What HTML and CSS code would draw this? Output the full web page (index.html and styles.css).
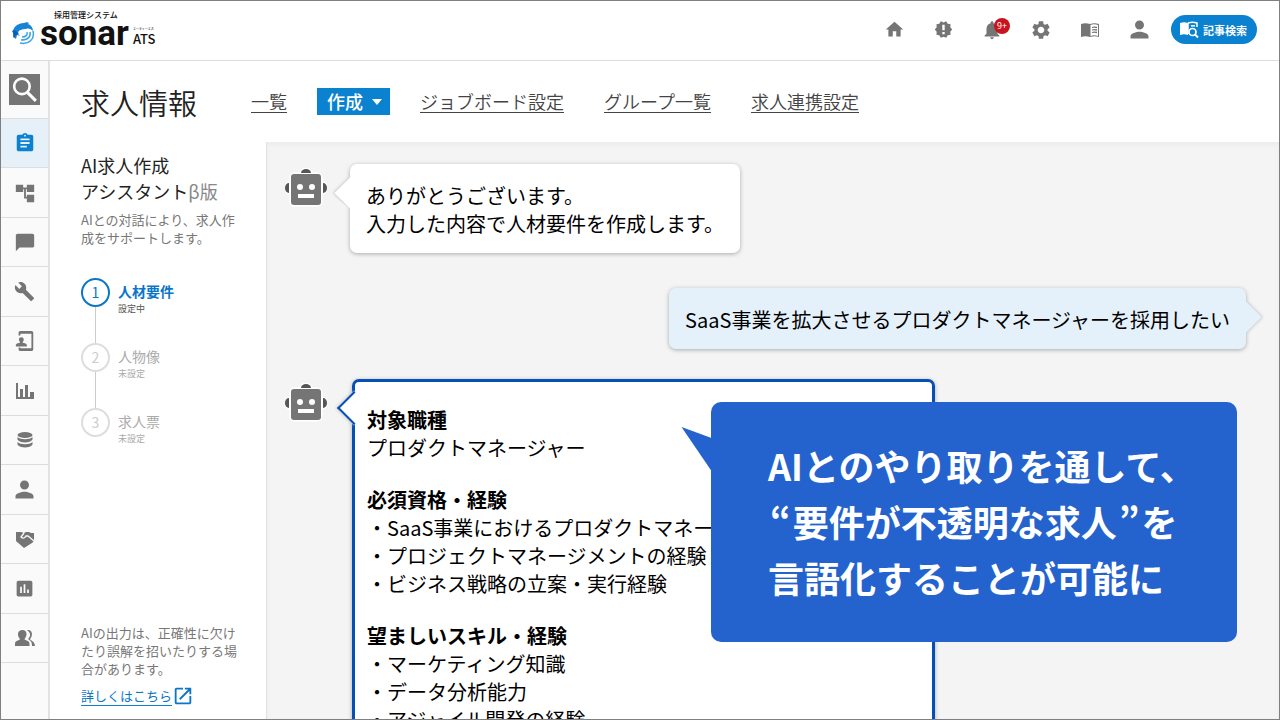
FILE: index.html
```
<!DOCTYPE html>
<html lang="ja">
<head>
  <meta charset="UTF-8">
  <title>求人情報 - sonar ATS</title>
  <link rel="stylesheet" href="styles.css">
</head>
<body>
  <!-- shared icons -->
  <svg class="defs" width="0" height="0">
    <symbol id="robot" viewBox="0 0 42 40">
      <g fill="#fff" stroke="#fff" stroke-width="3">
        <path d="M16 5a5 4 0 0 1 10 0z"/>
        <path d="M5 15a4 5 0 0 0 0 10z"/>
        <path d="M37 15a4 5 0 0 1 0 10z"/>
        <rect x="6" y="6" width="30" height="31" rx="3"/>
      </g>
      <g fill="#555">
        <path d="M16 5a5 4 0 0 1 10 0z"/>
        <path d="M4 15a4 5 0 0 0 0 10z"/>
        <path d="M38 15a4 5 0 0 1 0 10z"/>
      </g>
      <rect x="6" y="6" width="30" height="31" rx="3" fill="#757575"/>
      <g fill="#fff">
        <circle cx="15" cy="19" r="3"/>
        <circle cx="27" cy="19" r="3"/>
        <rect x="13" y="26" width="16" height="4"/>
      </g>
    </symbol>
    <symbol id="person" viewBox="0 0 24 24">
      <path d="M12 12c2.21 0 4-1.79 4-4s-1.79-4-4-4-4 1.79-4 4 1.79 4 4 4zm0 2c-2.67 0-8 1.34-8 4v2h16v-2c0-2.66-5.33-4-8-4z"/>
    </symbol>
  </svg>

  <header class="header">
    <a class="logo" href="#">
      <svg class="logo-mark" viewBox="0 0 23 23">
        <path fill="#1684d6" d="M1 12C0 6 5 1 12 1c2-1 4-1 5 0l-1 1c3 1 5 4 5 7-2-2-4-3-7-2-2 0-4 0-5 1-2 0-3 2-3 4l2 2-3-1-1 4C2 16 1 14 1 12z"/>
        <path fill="#0b5fb5" d="M0 9c1-1 3-1 4 0l3 3-3 1-2 3c-1-1-1-3 0-4z"/>
        <g fill="none" stroke="#37a5e4" stroke-width="1.5">
          <path d="M15 10c1 3-1 5-5 5"/>
          <path d="M18 10c1 5-2 8-9 8"/>
          <path d="M21 9c2 8-4 14-13 12"/>
        </g>
      </svg>
      <span class="logo-text">
        <span class="logo-lead">採用管理システム</span>
        <span class="logo-row">
          <span class="logo-name">sonar</span>
          <span class="logo-ats"><small>エーティーエス</small>ATS</span>
        </span>
      </span>
    </a>
    <nav class="tools">
      <a href="#" aria-label="ホーム"><svg width="21" height="21" viewBox="0 0 24 24"><path d="M10 20v-6h4v6h5v-8h3L12 3 2 12h3v8z"/></svg></a>
      <a href="#" aria-label="お知らせ"><svg width="19" height="19" viewBox="0 0 24 24"><path d="M23 12l-2.4-2.8.3-3.7-3.6-.8-1.9-3.2L12 3 8.600 1.500 6.700 4.700l-3.600.8.3 3.700L1 12l2.400 2.800-.3 3.700 3.600.8 1.900 3.200L12 21l3.400 1.500 1.900-3.200 3.600-.8-.3-3.700zM13.500 18h-3v-3h3zm0-5h-3V6h3z"/></svg></a>
      <a href="#" aria-label="通知"><svg width="22" height="22" viewBox="0 0 24 24"><path d="M12 22c1.100 0 2-.9 2-2h-4c0 1.100.9 2 2 2zm6-6v-5c0-3.070-1.640-5.640-4.500-6.320V4c0-.83-.67-1.500-1.500-1.500s-1.500.67-1.500 1.500v.68C7.630 5.360 6 7.920 6 11v5l-2 2v1h16v-1l-2-2z"/></svg><span class="count">9+</span></a>
      <a href="#" aria-label="設定"><svg width="22" height="22" viewBox="0 0 24 24"><path d="M19.14 12.94c.04-.3.06-.61.06-.94 0-.32-.02-.64-.07-.94l2.030-1.580c.18-.14.23-.41.12-.61l-1.920-3.320c-.12-.22-.37-.29-.59-.22l-2.390.96c-.5-.38-1.030-.7-1.620-.94l-.36-2.540c-.04-.24-.24-.41-.48-.41h-3.840c-.24 0-.43.17-.47.41l-.36 2.540c-.59.24-1.130.57-1.620.94l-2.390-.96c-.22-.08-.47 0-.59.22L2.740 8.870c-.12.21-.08.47.12.61l2.030 1.580c-.05.3-.09.63-.09.94s.02.64.07.94l-2.030 1.580c-.18.14-.23.41-.12.61l1.920 3.320c.12.22.37.29.59.22l2.390-.96c.5.38 1.030.7 1.620.94l.36 2.540c.05.24.24.41.48.41h3.840c.24 0 .44-.17.47-.41l.36-2.540c.59-.24 1.130-.56 1.620-.94l2.390.96c.22.08.47 0 .59-.22l1.920-3.320c.12-.22.07-.47-.12-.61l-2.010-1.580zM12 15.600c-1.980 0-3.600-1.620-3.600-3.600s1.620-3.600 3.600-3.600 3.600 1.620 3.600 3.600-1.620 3.600-3.600 3.600z"/></svg></a>
      <a href="#" aria-label="マニュアル"><svg width="20" height="20" viewBox="0 0 20 20"><path d="M1 4c3-1 6-1 9 0 3-1 6-1 9 0v13c-3-1-6-1-9 0-3-1-6-1-9 0z"/><path d="M10.500 5c2-1 5-1 7.500 0v11c-2.500-1-5-1-7.500 0z" fill="#fff"/><path d="M12 7.500c1.500-.5 3-.5 5 0M12 10c1.500-.5 3-.5 5 0M12 12.500c1.500-.5 3-.5 5 0" fill="none" stroke="#757575" stroke-width="1.300"/></svg></a>
      <a href="#" aria-label="アカウント"><svg width="27" height="27"><use href="#person"/></svg></a>
      <button class="search-btn" type="button">
        <svg width="20" height="20" viewBox="0 0 20 20"><path d="M1 3c3-1 5-1 8 0v12c-3-1-5-1-8 0z" fill="#fff"/><path d="M9 3c3-1 6-1 9 0v4M9 3v11M12 6c1-.5 2-.5 4 0" fill="none" stroke="#fff" stroke-width="1.500"/><circle cx="13.500" cy="12" r="3.500" fill="none" stroke="#fff" stroke-width="1.700"/><path d="M16 14.500l3 3" stroke="#fff" stroke-width="2"/></svg>
        記事検索
      </button>
    </nav>
  </header>

  <div class="app">
    <nav class="sidebar">
      <button class="side-search" type="button" aria-label="検索"><svg width="31" height="31" viewBox="0 0 30 30"><circle cx="12.500" cy="12" r="7.500" fill="none" stroke="#fff" stroke-width="2.500"/><path d="M18 18l8 8" stroke="#fff" stroke-width="3"/></svg></button>
      <a class="side-item active" href="#" aria-label="求人"><svg width="22" height="22" viewBox="0 0 24 24"><path d="M19 3h-4.180C14.400 1.840 13.300 1 12 1c-1.300 0-2.400.84-2.820 2H5c-1.100 0-2 .9-2 2v14c0 1.100.9 2 2 2h14c1.100 0 2-.9 2-2V5c0-1.100-.9-2-2-2zm-7 0c.55 0 1 .45 1 1s-.45 1-1 1-1-.45-1-1 .45-1 1-1zm2 14H7v-2h7v2zm3-4H7v-2h10v2zm0-4H7V7h10v2z"/></svg></a>
      <a class="side-item" href="#" aria-label="フロー"><svg width="22" height="22" viewBox="0 0 24 24"><path d="M22 11V3h-8v3h-4V3H2v8h8V8h1v10h3v4h8v-8h-8v2h-1V8h1v3z"/></svg></a>
      <a class="side-item" href="#" aria-label="メッセージ"><svg width="22" height="22" viewBox="0 0 24 24"><path d="M20 3H4c-1.100 0-2 .9-2 2v17l4-4h14c1.100 0 2-.9 2-2V5c0-1.100-.9-2-2-2z"/></svg></a>
      <a class="side-item" href="#" aria-label="ツール"><svg width="21" height="21" viewBox="0 0 24 24"><path d="M22.700 19l-9.100-9.100c.9-2.300.4-5-1.500-6.900-2-2-5-2.400-7.400-1.300L9 6 6 9 1.600 4.700C.4 7.100.9 10.100 2.900 12.100c1.900 1.900 4.600 2.400 6.900 1.500l9.100 9.100c.4.4 1 .4 1.400 0l2.300-2.300c.5-.4.5-1.100.1-1.400z"/></svg></a>
      <a class="side-item" href="#" aria-label="モバイル"><svg width="22" height="22" viewBox="0 0 24 24"><path d="M7 1h12c1.100 0 2 .9 2 2v18c0 1.100-.9 2-2 2H7c-1.100 0-2-.9-2-2v-2h2v1h12V4H7v2H5V3c0-1.100.9-2 2-2z"/><circle cx="8" cy="10.500" r="2.700"/><path d="M2 18v-2c1-1.500 3-1.500 4.500-2v-2h3v2c1.500.5 3.500.5 4.500 2v2z"/></svg></a>
      <a class="side-item" href="#" aria-label="分析"><svg width="20" height="20" viewBox="0 0 20 20"><path d="M1 2h2v14h2V8h3v8h2V4h3v12h2v-5h4v7H1z"/></svg></a>
      <a class="side-item" href="#" aria-label="データ"><svg width="20" height="20" viewBox="0 0 20 20"><ellipse cx="10" cy="5" rx="7.500" ry="3"/><path d="M2.500 7c3 3 12 3 15 0v2.500c-2 4-13 4-15 0z"/><path d="M2.500 12c3 3 12 3 15 0v2.500c-2 4-13 4-15 0z"/></svg></a>
      <a class="side-item" href="#" aria-label="応募者"><svg width="27" height="27"><use href="#person"/></svg></a>
      <a class="side-item" href="#" aria-label="マッチング"><svg width="20" height="20" viewBox="0 0 20 20"><path d="M1 3h5l3 1 2-1h3l2 1h3v8l-2 2-8 5-8-7z"/><path d="M9 4L6 8c2 2 4 1 5-1l2 0 6 5" fill="none" stroke="#fafafa" stroke-width="1.300"/></svg></a>
      <a class="side-item" href="#" aria-label="レポート"><svg width="21" height="21" viewBox="0 0 24 24"><path d="M19 3H5c-1.100 0-2 .9-2 2v14c0 1.100.9 2 2 2h14c1.100 0 2-.9 2-2V5c0-1.100-.9-2-2-2zM9 17H7v-7h2v7zm4 0h-2V7h2v10zm4 0h-2v-4h2v4z"/></svg></a>
      <a class="side-item" href="#" aria-label="ユーザー"><svg width="20" height="20" viewBox="0 0 20 20"><path d="M7.500 2c5 0 5 6 2 9 1 2 5 1 5 5v2H0v-2c0-4 4-3 5-5-3-3-3-9 2.500-9z"/><path d="M12 2c6-1 6 6 3 9 1 2 4.500 2 5 7h-3c0-4-1-5-4-7 3-3 3-6-1-9z"/></svg></a>
    </nav>

    <div class="page">
      <div class="page-head">
        <h1>求人情報</h1>
        <nav class="tabs">
          <a href="#">一覧</a>
          <button class="tab-current" type="button">作成<span class="caret"></span></button>
          <a href="#">ジョブボード設定</a>
          <a href="#">グループ一覧</a>
          <a href="#">求人連携設定</a>
        </nav>
      </div>

      <div class="content">
        <aside class="assistant">
          <h2>AI求人作成<br>アシスタント<span class="beta">β版</span></h2>
          <p>AIとの対話により、求人作成をサポートします。</p>
          <ol class="steps">
            <li class="current"><span class="num">1</span><div><strong>人材要件</strong><small>設定中</small></div></li>
            <li><span class="num">2</span><div><strong>人物像</strong><small>未設定</small></div></li>
            <li><span class="num">3</span><div><strong>求人票</strong><small>未設定</small></div></li>
          </ol>
          <div class="notice">
            <p>AIの出力は、正確性に欠けたり誤解を招いたりする場合があります。</p>
            <a href="#"><span>詳しくはこちら</span><svg width="22" height="22" viewBox="0 0 24 24"><path d="M19 19H5V5h7V3H5c-1.110 0-2 .9-2 2v14c0 1.100.89 2 2 2h14c1.100 0 2-.9 2-2v-7h-2v7zM14 3v2h3.590l-9.830 9.830 1.410 1.410L19 6.410V10h2V3h-7z"/></svg></a>
          </div>
        </aside>

        <main class="chat">
          <div class="row">
            <svg class="robot"><use href="#robot"/></svg>
            <div class="bubble">ありがとうございます。<br>入力した内容で人材要件を作成します。</div>
          </div>
          <div class="row user">
            <div class="bubble">SaaS事業を拡大させるプロダクトマネージャーを採用したい</div>
          </div>
          <div class="row">
            <svg class="robot"><use href="#robot"/></svg>
            <div class="bubble result">
              <section>
                <h3>対象職種</h3>
                <p>プロダクトマネージャー</p>
              </section>
              <section>
                <h3>必須資格・経験</h3>
                <p>・SaaS事業におけるプロダクトマネージャー</p>
                <p>・プロジェクトマネージメントの経験</p>
                <p>・ビジネス戦略の立案・実行経験</p>
              </section>
              <section>
                <h3>望ましいスキル・経験</h3>
                <p>・マーケティング知識</p>
                <p>・データ分析能力</p>
                <p>・アジャイル開発の経験</p>
              </section>
            </div>
          </div>

          <div class="callout">
            <svg class="callout-tail" viewBox="0 0 30 44"><path d="M0 0l30 11v33z"/></svg>
            <p>AIとのやり取りを通して、</p>
            <p><span class="quote">“</span>要件が不透明な求人<span class="quote">”</span>を</p>
            <p>言語化することが可能に</p>
          </div>
        </main>
      </div>
    </div>
  </div>
</body>
</html>
```
FILE: styles.css
```
* {
  box-sizing: border-box;
}
body {
  margin: 0;
  height: 100vh;
  display: flex;
  flex-direction: column;
  overflow: hidden;
  border: 1px solid #7f7f7f;
  background-color: #fff;
  color: #222;
  font-family: "Noto Sans CJK JP", sans-serif;
}
h1, h2, h3, p, ol {
  margin: 0;
  padding: 0;
}
button {
  border: none;
  padding: 0;
  font-family: inherit;
  cursor: pointer;
}
svg {
  display: block;
  flex-shrink: 0;
  fill: #757575;
}
.defs {
  position: absolute;
}

/* header */
.header {
  display: flex;
  justify-content: space-between;
  align-items: center;
  flex-shrink: 0;
  height: 60px;
  padding: 0 22px 2px 11px;
  border-bottom: 1px solid #ddd;
}
.logo {
  display: flex;
  align-items: flex-end;
  gap: 5px;
  color: #111;
  text-decoration: none;
}
.logo-mark {
  width: 23px;
  height: 23px;
  margin-bottom: 4px;
}
.logo-text {
  display: flex;
  flex-direction: column;
}
.logo-lead {
  padding-left: 14px;
  font-size: 8px;
  line-height: 8px;
  font-weight: 500;
}
.logo-row {
  display: flex;
  align-items: flex-end;
  gap: 4px;
}
.logo-name {
  font-family: Roboto, sans-serif;
  font-size: 35px;
  line-height: 30px;
  font-weight: 700;
}
.logo-ats {
  display: flex;
  flex-direction: column;
  gap: 1px;
  padding-bottom: 4px;
  font-size: 13px;
  line-height: 13px;
  font-weight: 500;
}
.logo-ats small {
  font-size: 3px;
  line-height: 3px;
}
.tools {
  display: flex;
  align-items: center;
  gap: 25px;
}
.tools a {
  position: relative;
  display: flex;
  align-items: center;
  justify-content: center;
  width: 24px;
  height: 24px;
}
.count {
  position: absolute;
  top: 0;
  right: -6px;
  width: 16px;
  height: 16px;
  border-radius: 50%;
  background-color: #c8141e;
  color: #fff;
  font-size: 9px;
  line-height: 16px;
  text-align: center;
}
.search-btn {
  display: flex;
  align-items: center;
  justify-content: center;
  gap: 4px;
  height: 29px;
  padding: 0 10px 0 8px;
  margin-left: -5px;
  border-radius: 15px;
  background-color: #0b82d0;
  color: #fff;
  font-size: 11px;
  font-weight: 700;
}

/* left icon bar */
.app {
  display: flex;
  flex: 1;
  min-height: 0;
}
.sidebar {
  flex-shrink: 0;
  width: 49px;
  border-right: 2px solid #e2e2e2;
  background-color: #fafafa;
}
.side-search {
  display: flex;
  align-items: center;
  justify-content: center;
  width: 47px;
  height: 58px;
  border-bottom: 1px solid #ddd;
  background-color: transparent;
}
.side-search svg {
  background-color: #757575;
}
.side-item {
  display: flex;
  align-items: center;
  justify-content: center;
  height: 50px;
  border-bottom: 1px solid #ddd;
}
.side-item:nth-child(even) {
  height: 49px;
}
.side-item.active {
  background-color: #e5f0f8;
}
.side-item.active svg {
  fill: #0b82d0;
}

/* page title and tabs */
.page {
  display: flex;
  flex-direction: column;
  flex: 1;
  min-width: 0;
}
.page-head {
  display: flex;
  align-items: center;
  gap: 54px;
  flex-shrink: 0;
  height: 81px;
  padding-left: 31px;
}
h1 {
  font-size: 29px;
  line-height: 40px;
  font-weight: 350;
}
.tabs {
  display: flex;
  align-items: center;
  gap: 40px;
}
.tabs a {
  border-bottom: 1px solid #444;
  color: #444;
  font-size: 18px;
  line-height: 22px;
  font-weight: 350;
  text-decoration: none;
}
.tab-current {
  display: flex;
  align-items: center;
  gap: 9px;
  height: 27px;
  padding: 0 8px 0 10px;
  margin: 0 -10px;
  background-color: #0b82d0;
  color: #fff;
  font-size: 18px;
  line-height: 27px;
  font-weight: 500;
}
.caret {
  border: 5px solid transparent;
  border-top: 6px solid #fff;
  border-bottom: none;
}

/* assistant panel */
.content {
  display: flex;
  flex: 1;
  min-height: 0;
}
.assistant {
  display: flex;
  flex-direction: column;
  flex-shrink: 0;
  width: 216px;
  padding: 10px 28px 12px 31px;
  color: #777;
  font-size: 13px;
  line-height: 18px;
}
.assistant h2 {
  margin-bottom: 7px;
  color: #222;
  font-size: 18px;
  line-height: 26px;
  font-weight: 400;
}
.beta {
  color: #888;
}
.steps {
  margin-top: 31px;
  list-style: none;
}
.steps li {
  position: relative;
  display: flex;
  gap: 8px;
  height: 65px;
  color: #aaa;
}
.steps li + li::before {
  content: "";
  position: absolute;
  left: 14px;
  top: -36px;
  height: 36px;
  border-left: 1px solid #ccc;
}
.num {
  width: 29px;
  height: 29px;
  border: 2px solid #ddd;
  border-radius: 50%;
  color: #ccc;
  font-size: 14px;
  line-height: 25px;
  text-align: center;
}
.steps strong {
  display: block;
  font-size: 14px;
  line-height: 26px;
  font-weight: 400;
}
.steps small {
  display: block;
  font-size: 9px;
  line-height: 9px;
}
.steps .current strong {
  color: #0b76c8;
  font-weight: 700;
}
.steps .current small {
  color: #555;
}
.steps .current .num {
  border-color: #0b76c8;
  color: #0b76c8;
}
.notice {
  margin-top: auto;
}
.notice a {
  display: flex;
  align-items: center;
  margin-top: 7px;
  color: #0b76c8;
  text-decoration: none;
}
.notice a span {
  border-bottom: 1px solid #0b82d0;
}
.notice a svg {
  fill: #0b76c8;
}

/* chat */
.chat {
  position: relative;
  flex: 1;
  min-width: 0;
  padding: 22px 33px 0 18px;
  border-left: 1px solid #e2e2e2;
  background-color: #f4f4f4;
  box-shadow: inset 0 3px 4px #ececec;
  color: #000;
  font-size: 20px;
  line-height: 28px;
}
.row {
  display: flex;
  align-items: flex-start;
  gap: 23px;
}
.row.user {
  justify-content: flex-end;
  margin: 35px 0 30px;
}
.robot {
  width: 42px;
  height: 40px;
  margin-top: 4px;
}
.bubble {
  position: relative;
  padding: 18px 16px 15px;
  border-radius: 7px;
  background-color: #fff;
  box-shadow: 0 1px 4px #aaa;
}
.bubble::before {
  content: "";
  position: absolute;
  left: -11px;
  top: 18px;
  width: 22px;
  height: 22px;
  background-color: #fff;
  box-shadow: -1px 1px 3px #ccc;
  clip-path: polygon(-20% -20%, 100% 100%, -20% 120%);
  transform: rotate(45deg);
}
.user .bubble {
  background-color: #e5f1fa;
}
.user .bubble::before {
  left: auto;
  right: -11px;
  background-color: #e5f1fa;
  box-shadow: 1px -1px 3px #ccc;
  clip-path: polygon(-20% -20%, 120% -20%, 120% 120%);
}
.bubble.result {
  flex: 0 1 583px;
  margin-left: 2px;
  padding: 24px 12px;
  border: 3px solid #0550b4;
}
/* the tail covers the left border so the outline runs into it */
.bubble.result::before {
  left: -13px;
  top: 14px;
  border-left: 2px solid #0550b4;
  border-bottom: 2px solid #0550b4;
  clip-path: polygon(-20% -20%, 0 -20%, 120% 100%, 120% 120%, -20% 120%);
}
.result section + section {
  margin-top: 24px;
}
.result h3 {
  font-size: 20px;
  font-weight: 700;
}
.result p {
  white-space: nowrap;
}

.callout {
  position: absolute;
  top: 260px;
  right: 42px;
  width: 526px;
  padding: 35px 20px 37px 57px;
  border-radius: 10px;
  background-color: #2463ce;
  color: #fff;
  font-size: 36px;
  line-height: 56px;
  font-weight: 700;
}
.callout-tail {
  position: absolute;
  left: -30px;
  top: 25px;
  width: 31px;
  height: 44px;
  fill: #2463ce;
}
.quote {
  padding: 0 2px;
  font-feature-settings: "palt";
}
```
